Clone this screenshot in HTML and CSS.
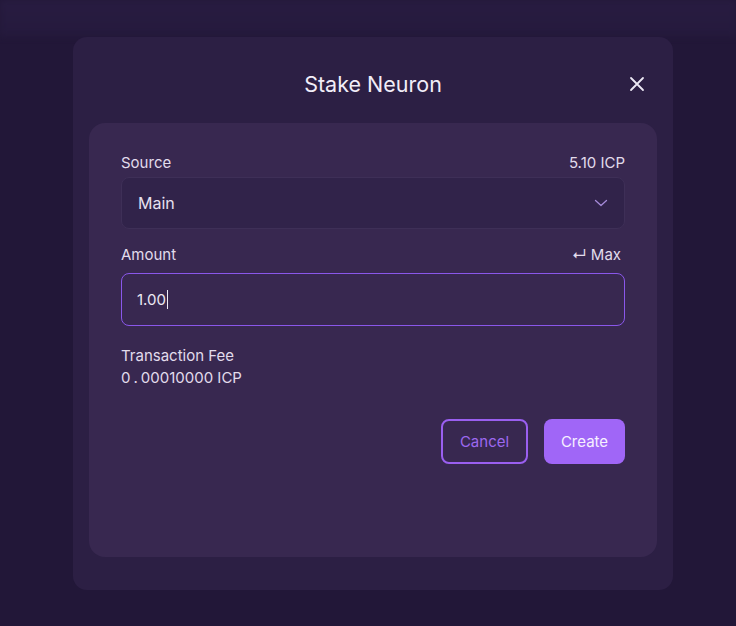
FILE: index.html
```html
<!DOCTYPE html>
<html>
<head>
<meta charset="utf-8">
<link rel="stylesheet" href="styles.css">
</head>
<body>
<div class="topbar"></div>
<div class="stage">
  <div class="modal">
    <div class="modal-head">
      <h1 class="title">Stake Neuron</h1>
      <button class="close" aria-label="Close">
        <svg width="16" height="16" viewBox="0 0 16 16"><path d="M2 2L14 14M14 2L2 14" stroke="#ece8f4" stroke-width="1.8" stroke-linecap="round"/></svg>
      </button>
    </div>
    <div class="card">
      <div class="field field-source">
        <div class="label-row"><span>Source</span><span>5.10 ICP</span></div>
        <div class="select">
          <span>Main</span>
          <svg width="14" height="8" viewBox="0 0 14 8"><path d="M1.5 1.5L7 6.5L12.5 1.5" stroke="#a58ad8" stroke-width="1.3" fill="none" stroke-linecap="round" stroke-linejoin="round"/></svg>
        </div>
      </div>
      <div class="field field-amount">
        <div class="label-row"><span>Amount</span><span class="max"><span class="ret">↵</span> Max</span></div>
        <div class="input"><span>1.00</span><span class="caret"></span></div>
      </div>
      <div class="fee">
        <div>Transaction Fee</div>
        <div class="fee-val">0<span class="dot">.</span>00010000 ICP</div>
      </div>
      <div class="actions">
        <button class="btn btn-outline">Cancel</button>
        <button class="btn btn-primary">Create</button>
      </div>
    </div>
  </div>
</div>
</body>
</html>
```
FILE: styles.css
```css
* { box-sizing: border-box; }
html, body { margin: 0; padding: 0; }
body {
  width: 736px;
  height: 626px;
  overflow: hidden;
  background: #221738;
  font-family: Inter, "Noto Sans", sans-serif;
  color: #ece8f4;
  position: relative;
}
.topbar {
  position: absolute;
  left: 0; top: 0; right: 0;
  height: 36px;
  background: linear-gradient(#281c41, #251a3d);
  filter: blur(3px);
}
.stage {
  position: relative;
  padding: 37px 63px 0 73px;
}
.modal {
  width: 600px;
  height: 553px;
  background: #2c1f44;
  border-radius: 14px;
  padding: 0 16px;
}
.modal-head {
  height: 86px;
  display: flex;
  align-items: center;
  justify-content: center;
  position: relative;
  padding-top: 8px;
}
.title {
  margin: 0;
  font-size: 21.5px;
  font-weight: 400;
  color: #f1edf8;
}
.close {
  position: absolute;
  right: 12px;
  top: 39px;
  background: none;
  border: 0;
  padding: 0;
  width: 16px; height: 16px;
  display: flex;
}
.card {
  height: 434px;
  background: #382850;
  border-radius: 16px;
  padding: 31px 32px 0 32px;
}
.label-row {
  display: flex;
  justify-content: space-between;
  font-size: 15px;
  line-height: 18px;
  color: #e2dcec;
}
.field-source .label-row { margin-bottom: 5px; }
.field-source { margin-bottom: 17px; }
.field-amount .label-row { margin-bottom: 9px; }
.max { padding-right: 4px; }
.ret { font-size: 15px; }
.select {
  height: 52px;
  border-radius: 8px;
  background: #31234a;
  border: 1px solid #3e2f57;
  display: flex;
  align-items: center;
  justify-content: space-between;
  padding: 0 16px 0 16px;
  font-size: 16px;
  color: #e6e0ef;
}
.input {
  height: 53px;
  border-radius: 8px;
  border: 1px solid #8a57ea;
  display: flex;
  align-items: center;
  padding: 0 15px;
  font-size: 15px;
  color: #ece8f4;
}
.caret {
  display: inline-block;
  width: 1px;
  height: 19px;
  background: #f0ecf6;
  margin-left: 1px;
}
.fee {
  margin-top: 19px;
  font-size: 15px;
  line-height: 22px;
  color: #e2dcec;
}
.dot { margin: 0 3px; }
.actions {
  display: flex;
  justify-content: flex-end;
  gap: 16px;
  margin-top: 30px;
}
.btn {
  height: 45px;
  border-radius: 8px;
  font-family: Inter, "Noto Sans", sans-serif;
  font-size: 15px;
  padding: 0 16px;
  cursor: pointer;
}
.btn-outline {
  width: 87px;
  background: transparent;
  border: 2px solid #9a5ff0;
  color: #9d68ef;
}
.btn-primary {
  width: 81px;
  background: #a066f7;
  border: 0;
  color: #f6f0ff;
}
```
